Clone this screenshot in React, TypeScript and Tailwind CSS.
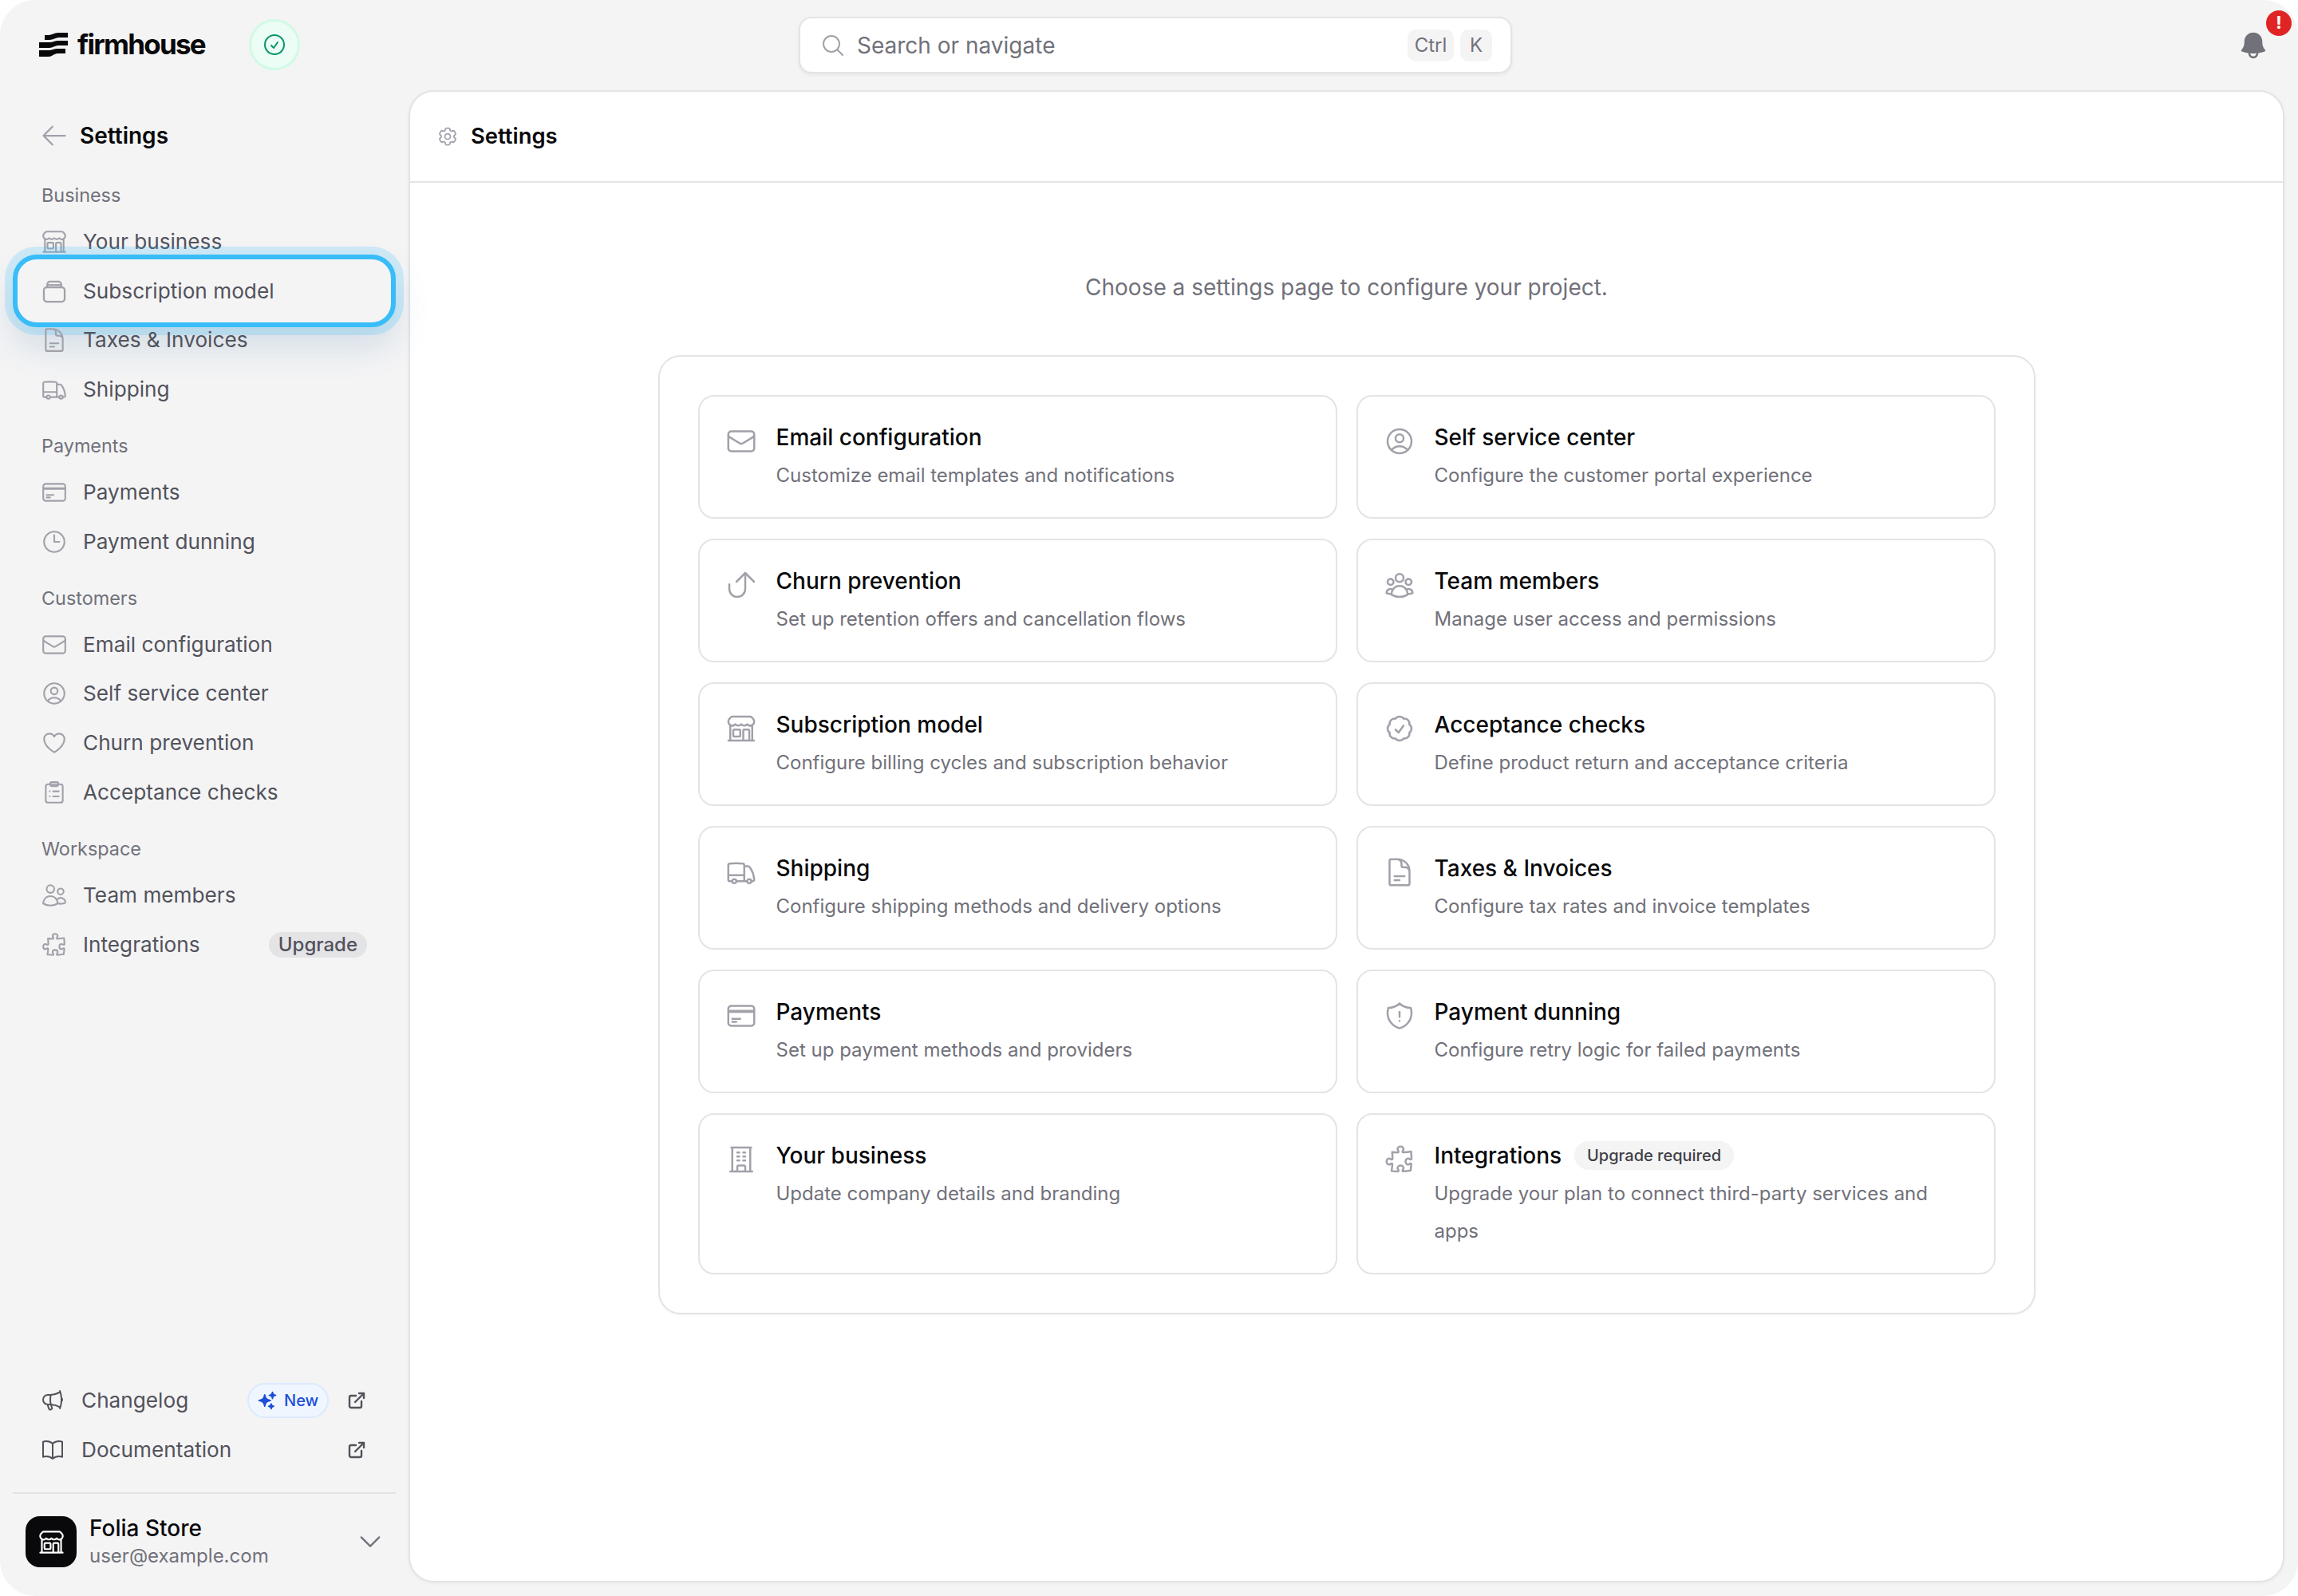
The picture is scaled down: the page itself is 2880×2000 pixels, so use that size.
import type { ComponentType, ReactNode } from 'react';
import { ExternalLink } from 'lucide-react';
import {
  HiBell,
  HiOutlineArrowLeft,
  HiOutlineBookOpen,
  HiOutlineBuildingOffice,
  HiOutlineBuildingStorefront,
  HiOutlineCheckBadge,
  HiOutlineCheckCircle,
  HiOutlineChevronDown,
  HiOutlineClock,
  HiOutlineCog6Tooth,
  HiOutlineCreditCard,
  HiOutlineDocumentText,
  HiOutlineEnvelope,
  HiOutlineHeart,
  HiOutlineMagnifyingGlass,
  HiOutlineMegaphone,
  HiOutlinePuzzlePiece,
  HiOutlineShieldExclamation,
  HiOutlineTruck,
  HiOutlineUserCircle,
  HiOutlineUserGroup,
  HiOutlineUsers,
  HiSparkles,
} from 'react-icons/hi2';

type Icon = ComponentType<{ className?: string }>;

function ChurnIcon({ className }: { className?: string }) {
  return (
    <svg viewBox="0 0 24 24" fill="none" stroke="currentColor" strokeWidth={1.5} strokeLinecap="round" strokeLinejoin="round" className={className}>
      <path d="M15 3v12a6 6 0 0 1-12 0v-3.5" />
      <path d="M8.4 9.6 15 3l6.6 6.6" />
    </svg>
  );
}

function SubscriptionIcon({ className }: { className?: string }) {
  return (
    <svg viewBox="0 0 24 24" fill="none" stroke="currentColor" strokeWidth={1.6} strokeLinejoin="round" className={className}>
      <rect x="2.8" y="8.5" width="18.4" height="12.7" rx="2.5" />
      <path d="M5.8 8.5V6a2.5 2.5 0 0 1 2.5-2.5h7.4A2.5 2.5 0 0 1 18.2 6v2.5" />
      <path d="M6 6.5h12" />
    </svg>
  );
}

function ClipboardIcon({ className }: { className?: string }) {
  return (
    <svg viewBox="0 0 24 24" fill="none" stroke="currentColor" strokeWidth={1.5} strokeLinecap="round" strokeLinejoin="round" className={className}>
      <rect x="4.5" y="4.8" width="15" height="16.2" rx="2" />
      <rect x="8.5" y="2.8" width="7" height="3.6" rx="1.2" />
      <path d="M8 11h.01M11 11h5M8 15.5h.01M11 15.5h5" />
    </svg>
  );
}

function LogoMark() {
  return (
    <svg viewBox="0 0 36 30" className="h-[30px] w-[36px]" fill="#09090b">
      <path d="M12 3c4 0 7-3 12-3h12v6H25c-4 0-7 3-12 3H7V3h5Z" />
      <path d="M0 12h13c4 0 7-2 11-2h12v6H24c-4 0-7 3-11 3H0v-7Z" />
      <path d="M0 22h12c4 0 7-2 11-2h10v6H23c-4 0-7 4-11 4H0v-8Z" />
    </svg>
  );
}

const NAV_GROUPS: { label: string; items: { label: string; icon: Icon; focus?: boolean; badge?: string }[] }[] = [
  {
    label: 'Business',
    items: [
      { label: 'Your business', icon: HiOutlineBuildingStorefront },
      { label: 'Subscription model', icon: SubscriptionIcon, focus: true },
      { label: 'Taxes & Invoices', icon: HiOutlineDocumentText },
      { label: 'Shipping', icon: HiOutlineTruck },
    ],
  },
  {
    label: 'Payments',
    items: [
      { label: 'Payments', icon: HiOutlineCreditCard },
      { label: 'Payment dunning', icon: HiOutlineClock },
    ],
  },
  {
    label: 'Customers',
    items: [
      { label: 'Email configuration', icon: HiOutlineEnvelope },
      { label: 'Self service center', icon: HiOutlineUserCircle },
      { label: 'Churn prevention', icon: HiOutlineHeart },
      { label: 'Acceptance checks', icon: ClipboardIcon },
    ],
  },
  {
    label: 'Workspace',
    items: [
      { label: 'Team members', icon: HiOutlineUsers },
      { label: 'Integrations', icon: HiOutlinePuzzlePiece, badge: 'Upgrade' },
    ],
  },
];

const CARDS: { title: string; text: string; icon: Icon; badge?: string }[] = [
  { title: 'Email configuration', text: 'Customize email templates and notifications', icon: HiOutlineEnvelope },
  { title: 'Self service center', text: 'Configure the customer portal experience', icon: HiOutlineUserCircle },
  { title: 'Churn prevention', text: 'Set up retention offers and cancellation flows', icon: ChurnIcon },
  { title: 'Team members', text: 'Manage user access and permissions', icon: HiOutlineUserGroup },
  { title: 'Subscription model', text: 'Configure billing cycles and subscription behavior', icon: HiOutlineBuildingStorefront },
  { title: 'Acceptance checks', text: 'Define product return and acceptance criteria', icon: HiOutlineCheckBadge },
  { title: 'Shipping', text: 'Configure shipping methods and delivery options', icon: HiOutlineTruck },
  { title: 'Taxes & Invoices', text: 'Configure tax rates and invoice templates', icon: HiOutlineDocumentText },
  { title: 'Payments', text: 'Set up payment methods and providers', icon: HiOutlineCreditCard },
  { title: 'Payment dunning', text: 'Configure retry logic for failed payments', icon: HiOutlineShieldExclamation },
  { title: 'Your business', text: 'Update company details and branding', icon: HiOutlineBuildingOffice },
  { title: 'Integrations', text: 'Upgrade your plan to connect third-party services and apps', icon: HiOutlinePuzzlePiece, badge: 'Upgrade required' },
];

function NavRow({ label, icon: IconCmp, focus, badge }: { label: string; icon: Icon; focus?: boolean; badge?: string }) {
  return (
    <div className="relative flex h-[61.8px] items-center">
      {focus && (
        <div className="absolute left-[16px] right-[16px] top-[-15px] h-[91px] rounded-[30px] border-[6px] border-[#38bdf8] bg-[#f4f4f5] shadow-[0_0_0_10px_rgba(56,189,248,0.2),0_24px_44px_rgba(30,100,150,0.16)]" />
      )}
      <div className="relative ml-[51px] flex flex-1 items-center">
        <IconCmp className="size-[34px] shrink-0 text-[#a1a1aa]" />
        <span className="ml-[19px] text-[26.2px] leading-[40px] text-[#52525b]">{label}</span>
        {badge && (
          <span className="ml-auto mr-[52px] rounded-full bg-[#e4e4e7] px-[12px] text-[24px] font-medium leading-[32px] text-[#52525b]">{badge}</span>
        )}
      </div>
    </div>
  );
}

function BottomLink({ icon: IconCmp, children, badge }: { icon: Icon; children: ReactNode; badge?: boolean }) {
  return (
    <div className="flex h-[62px] items-center pl-[50px] pr-[53px]">
      <IconCmp className="size-[32px] shrink-0 text-[#52525b]" />
      <span className="ml-[20px] text-[26.2px] leading-[40px] text-[#52525b]">{children}</span>
      {badge && (
        <span className="ml-auto flex h-[44px] w-[102px] items-center gap-[8px] rounded-full border-2 border-[#dbeafe] bg-[#eff6ff] pl-[10px] text-[20px] font-medium text-[#1d4ed8]">
          <HiSparkles className="size-[26px]" />
          New
        </span>
      )}
      <ExternalLink className={`${badge ? 'ml-[23px]' : 'ml-auto'} size-[24px] text-[#52525b]`} strokeWidth={2.4} />
    </div>
  );
}

function SettingsCard({ title, text, icon: IconCmp, badge }: { title: string; text: string; icon: Icon; badge?: string }) {
  return (
    <div className="flex items-start gap-[24px] rounded-[20px] border-2 border-[#e4e4e7] bg-white px-[32px] pb-[29px] pt-[31px]">
      <IconCmp className="mt-[5px] size-[40px] shrink-0 text-[#a1a1aa]" />
      <div className="min-w-0">
        <div className="flex h-[40px] items-center gap-[16px]">
          <span className="text-[28px] font-medium leading-[40px] text-[#09090b]">{title}</span>
          {badge && (
            <span className="rounded-full bg-[#f4f4f5] px-[16px] text-[20px] font-medium leading-[36px] text-[#3f3f46]">{badge}</span>
          )}
        </div>
        <p className="mt-[4px] text-[24px] leading-[47px] text-[#71717a]">{text}</p>
      </div>
    </div>
  );
}

export default function App() {
  return (
    <div className="h-[2000px] w-[2880px] overflow-hidden bg-white [font-family:Inter,sans-serif]">
      <div className="flex h-full flex-col rounded-[44px] bg-[#f4f4f5]">
        {/* Top bar */}
        <header className="flex h-[113px] shrink-0 items-center">
          <div className="mb-[2px] flex w-[1001px] items-center pl-[49px]">
            <LogoMark />
            <span className="ml-[12px] text-[35px] font-bold leading-none tracking-[-0.05em] text-[#09090b]">firmhouse</span>
            <div className="ml-[55px] flex size-[64px] items-center justify-center rounded-full border-[3px] border-[#d1fae5] bg-[#ecfdf5]">
              <HiOutlineCheckCircle className="size-[32px] text-[#059669]" />
            </div>
          </div>
          <div className="flex h-[71px] w-[894px] items-center rounded-[16px] border-2 border-[#e4e4e7] bg-white pl-[25px] pr-[23px] shadow-[0_2px_4px_rgba(0,0,0,0.06)]">
            <HiOutlineMagnifyingGlass className="size-[32px] text-[#a1a1aa]" />
            <span className="ml-[14px] text-[28px] text-[#71717a]">Search or navigate</span>
            <span className="ml-auto flex h-[40px] w-[58px] items-center justify-center rounded-[10px] bg-[#f4f4f5] text-[24px] text-[#71717a]">Ctrl</span>
            <span className="ml-[8px] flex h-[40px] w-[40px] items-center justify-center rounded-[10px] bg-[#f4f4f5] text-[24px] text-[#71717a]">K</span>
          </div>
          <div className="relative ml-auto mr-[36px]">
            <HiBell className="size-[40px] text-[#71717a]" />
            <span className="absolute right-[-28px] top-[-24px] flex size-[32px] items-center justify-center rounded-full bg-[#e02424] text-[22px] font-bold text-white">!</span>
          </div>
        </header>

        <div className="flex min-h-0 flex-1">
          {/* Sidebar */}
          <aside className="flex w-[512px] shrink-0 flex-col">
            <div className="mt-[26px] flex h-[62px] items-center pl-[50px]">
              <HiOutlineArrowLeft className="size-[36px] text-[#a1a1aa]" />
              <span className="ml-[14px] text-[28px] font-semibold text-[#09090b]">Settings</span>
            </div>
            {NAV_GROUPS.map((group, i) => (
              <div key={group.label} className={i === 0 ? 'mt-[28px]' : 'mt-[24px]'}>
                <div className="mb-[11px] pl-[52px] text-[23.4px] leading-[32px] text-[#71717a]">{group.label}</div>
                {group.items.map(item => (
                  <NavRow key={item.label} {...item} />
                ))}
              </div>
            ))}
            <div className="mt-auto">
              <BottomLink icon={HiOutlineMegaphone} badge>Changelog</BottomLink>
              <BottomLink icon={HiOutlineBookOpen}>Documentation</BottomLink>
              <div className="mx-[16px] mt-[22px] flex items-center border-t-2 border-[#e4e4e7] pb-[33px] pl-[16px] pr-[14px] pt-[25px]">
                <div className="flex size-[64px] items-center justify-center rounded-[18px] bg-[#09090b]">
                  <HiOutlineBuildingStorefront className="size-[35px] text-white" />
                </div>
                <div className="ml-[16px]">
                  <div className="text-[28px] font-medium leading-[36px] text-[#09090b]">Folia Store</div>
                  <div className="text-[24px] leading-[34px] text-[#71717a]">user@example.com</div>
                </div>
                <HiOutlineChevronDown className="ml-auto size-[36px] text-[#71717a]" />
              </div>
            </div>
          </aside>

          {/* Main */}
          <main className="mb-[17px] mr-[17px] flex min-w-0 flex-1 flex-col rounded-[32px] border-2 border-[#e4e4e7] bg-white shadow-[0_1px_4px_rgba(0,0,0,0.05)]">
            <div className="flex h-[114px] shrink-0 items-center border-b-2 border-[#e4e4e7] pl-[33px]">
              <HiOutlineCog6Tooth className="size-[28px] text-[#a1a1aa]" />
              <span className="ml-[15px] text-[27.4px] font-semibold text-[#09090b]">Settings</span>
            </div>
            <p className="mt-[111px] text-center text-[28px] leading-[40px] text-[#71717a]">Choose a settings page to configure your project.</p>
            <div className="mx-auto mt-[65px] grid w-[1726px] grid-cols-2 gap-x-[24px] gap-y-[25px] rounded-[28px] border-2 border-[#e4e4e7] bg-white p-[48px] shadow-[0_1px_3px_rgba(0,0,0,0.05)]">
              {CARDS.map(card => (
                <SettingsCard key={card.title} {...card} />
              ))}
            </div>
          </main>
        </div>
      </div>
    </div>
  );
}
